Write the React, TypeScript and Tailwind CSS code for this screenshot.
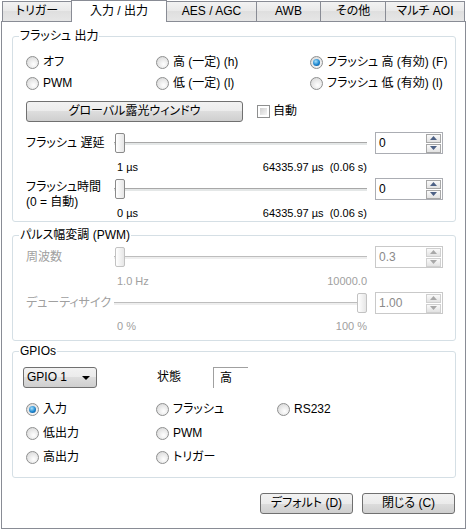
import React from "react";

const FONT =
  "font-['Liberation_Sans','Noto_Sans_CJK_JP',sans-serif] [font-feature-settings:'palt'] text-[12px] leading-[15px] text-black";

function Radio({
  checked,
  label,
  disabled,
}: {
  checked?: boolean;
  label: string;
  disabled?: boolean;
}) {
  return (
    <div className="flex items-center gap-[4px]">
      <span
        className={`flex h-[13px] w-[13px] items-center justify-center rounded-full border ${
          disabled ? "border-[#c4c4c4]" : "border-[#8e8f8f]"
        } bg-[radial-gradient(circle_at_60%_65%,#ffffff,#d2d2d2)]`}
      >
        {checked && (
          <span className="h-[7px] w-[7px] rounded-full bg-[radial-gradient(circle_at_40%_35%,#a8e0fa,#1c86cf_55%,#0b3f78)]" />
        )}
      </span>
      <span className={`whitespace-pre ${disabled ? "text-[#a0a0a0]" : ""}`}>{label}</span>
    </div>
  );
}

function Group({
  title,
  className,
  children,
}: {
  title: string;
  className: string;
  children: React.ReactNode;
}) {
  return (
    <div
      className={`relative ml-[10px] w-[444px] rounded-[3px] border border-[#d5dfe5] ${className}`}
    >
      <span className="absolute left-[6px] top-[-8px] bg-white px-[1px] leading-[15px]">
        {title}
      </span>
      {children}
    </div>
  );
}

function Arrow({ up, disabled }: { up?: boolean; disabled?: boolean }) {
  return (
    <svg width="7" height="4" viewBox="0 0 7 4">
      <polygon
        points={up ? "0,4 7,4 3.5,0" : "0,0 7,0 3.5,4"}
        fill={disabled ? "#a8a8a8" : "#4d6185"}
      />
    </svg>
  );
}

function Spin({ value, disabled }: { value: string; disabled?: boolean }) {
  return (
    <div
      className={`flex h-[22px] w-[68px] border ${
        disabled ? "border-[#c9c9c9]" : "border-[#abadb3]"
      } bg-white`}
    >
      <span
        className={`flex-1 pl-[3px] leading-[20px] ${
          disabled ? "text-[#8a8a8a]" : ""
        }`}
      >
        {value}
      </span>
      <div className="flex flex-col justify-center gap-[1px] pr-[1px]">
        {[true, false].map((up) => (
          <div
            key={String(up)}
            className={`flex h-[9px] w-[15px] items-center justify-center border ${
              disabled ? "border-[#d0d0d0]" : "border-[#a7a7a7]"
            } bg-[linear-gradient(#fafafa,#e2e2e2)]`}
          >
            <Arrow up={up} disabled={disabled} />
          </div>
        ))}
      </div>
    </div>
  );
}

function Slider({ end, disabled }: { end?: boolean; disabled?: boolean }) {
  return (
    <div className="relative flex h-[22px] w-[256px] items-center">
      <div
        className={`ml-[2px] mr-[1px] h-[3px] flex-1 border-t ${
          disabled ? "border-[#bdbdbd] bg-[#eeeeee]" : "border-[#a8a8a8] bg-[#e4e7e7]"
        }`}
      />
      <div
        className={`absolute top-[1px] h-[20px] w-[10px] rounded-[2px] border ${
          end ? "right-[1px]" : "left-[3px]"
        } ${
          disabled ? "border-[#c2c2c2]" : "border-[#8a8a8a]"
        } bg-[linear-gradient(90deg,#ffffff,#e6e6e6)]`}
      />
    </div>
  );
}

function Values({
  left,
  right,
  disabled,
  mt,
}: {
  left: string;
  right: string;
  disabled?: boolean;
  mt: string;
}) {
  return (
    <div
      className={`${mt} flex h-[14px] items-center justify-between pl-[5px] pr-[1px] text-[11px] ${
        disabled ? "text-[#a0a0a0]" : ""
      }`}
    >
      <span>{left}</span>
      <span className="whitespace-pre">{right}</span>
    </div>
  );
}

function Button({ children, w }: { children: React.ReactNode; w: string }) {
  return (
    <div
      className={`${w} flex h-[21px] items-center justify-center rounded-[3px] border border-[#707070] bg-[linear-gradient(#f2f2f2,#ebebeb_50%,#dddddd_50%,#cfcfcf)]`}
    >
      {children}
    </div>
  );
}

const tabs = [
  { label: "トリガー", w: "w-[69px]", cls: "border-l" },
  { label: "入力 / 出力", w: "w-[96px]", active: true },
  { label: "AES / AGC", w: "w-[89px]", cls: "" },
  { label: "AWB", w: "w-[64px]", cls: "border-l" },
  { label: "その他", w: "w-[65px]", cls: "border-l" },
  { label: "マルチ AOI", w: "w-[80px]", cls: "border-x" },
];

export default function App() {
  return (
    <div className={`${FONT} h-[530px] w-[468px] overflow-hidden bg-white`}>
      {/* tab strip */}
      <div className="relative z-10 flex h-[22px] items-start pl-[2px]">
        {tabs.map((t) =>
          t.active ? (
            <div
              key={t.label}
              className={`${t.w} flex h-[22px] items-center justify-center border-x border-t border-[#898c95] bg-white`}
            >
              {t.label}
            </div>
          ) : (
            <div
              key={t.label}
              className={`${t.w} mt-[1px] flex h-[20px] items-center justify-center border-t ${t.cls} border-[#898c95] bg-[linear-gradient(#f3f3f3,#e8e8e8_50%,#dfdfdf_50%,#e6e6e6)]`}
            >
              {t.label}
            </div>
          )
        )}
      </div>

      {/* panel */}
      <div className="-mt-[1px] ml-[1px] h-[508px] w-[465px] border border-[#898c95] bg-white">
        {/* Flash output */}
        <Group title="フラッシュ 出力" className="mt-[14px] h-[186px]">
          <div className="pl-[13px] pt-[15px]">
            <div className="flex h-[21px] items-center">
              <div className="w-[130px]">
                <Radio label="オフ" />
              </div>
              <div className="w-[154px]">
                <Radio label="高 (一定) (h)" />
              </div>
              <Radio checked label="フラッシュ 高 (有効) (F)" />
            </div>
            <div className="flex h-[21px] items-center">
              <div className="w-[130px]">
                <Radio label="PWM" />
              </div>
              <div className="w-[154px]">
                <Radio label="低 (一定) (l)" />
              </div>
              <Radio label="フラッシュ 低 (有効) (l)" />
            </div>

            <div className="mt-[7px] flex h-[21px] items-center">
              <Button w="w-[217px]">グローバル露光ウィンドウ</Button>
              <span className="ml-[14px] h-[13px] w-[13px] border border-[#8e8f8f] bg-white p-[2px]">
                <span className="block h-full w-full bg-[linear-gradient(135deg,#cfcfcf,#f6f6f6)]" />
              </span>
              <span className="ml-[3px]">自動</span>
            </div>

            {/* slider 1 */}
            <div className="mt-[10px] flex">
              <div className="flex h-[22px] w-[86px] items-center">フラッシュ 遅延</div>
              <div className="w-[256px]">
                <Slider />
                <Values mt="mt-[6px]" left="1 µs" right="64335.97 µs  (0.06 s)" />
              </div>
              <div className="ml-[7px]">
                <Spin value="0" />
              </div>
            </div>

            {/* slider 2 */}
            <div className="mt-[4px] flex">
              <div className="w-[86px] pt-[2px] leading-[15px]">
                <div>フラッシュ時間</div>
                <div>(0 = 自動)</div>
              </div>
              <div className="w-[256px]">
                <Slider />
                <Values mt="mt-[6px]" left="0 µs" right="64335.97 µs  (0.06 s)" />
              </div>
              <div className="ml-[7px]">
                <Spin value="0" />
              </div>
            </div>
          </div>
        </Group>

        {/* PWM */}
        <Group title="パルス幅変調 (PWM)" className="mt-[13px] h-[106px]">
          <div className="pl-[13px] pt-[10px]">
            <div className="flex">
              <div className="flex h-[22px] w-[86px] items-center text-[#a0a0a0]">周波数</div>
              <div className="w-[256px]">
                <Slider disabled />
                <Values mt="mt-[6px]" left="1.0 Hz" right="10000.0" disabled />
              </div>
              <div className="ml-[7px]">
                <Spin value="0.3" disabled />
              </div>
            </div>
            <div className="mt-[4px] flex">
              <div className="flex h-[22px] w-[86px] items-center overflow-hidden whitespace-nowrap text-[#a0a0a0]">
                デューティサイク
              </div>
              <div className="w-[256px]">
                <Slider end disabled />
                <Values mt="mt-[5px]" left="0 %" right="100 %" disabled />
              </div>
              <div className="ml-[7px]">
                <Spin value="1.00" disabled />
              </div>
            </div>
          </div>
        </Group>

        {/* GPIOs */}
        <Group title="GPIOs" className="mt-[10px] h-[127px]">
          <div className="pt-[15px]">
            <div className="flex h-[21px] items-center pl-[10px]">
              <div className="flex h-[21px] w-[74px] items-center justify-between rounded-[3px] border border-[#707070] bg-[linear-gradient(#f2f2f2,#ebebeb_50%,#dddddd_50%,#cfcfcf)] pl-[3px] pr-[6px]">
                <span>GPIO 1</span>
                <svg width="8" height="4" viewBox="0 0 8 4">
                  <polygon points="0,0 8,0 4,4" fill="#000" />
                </svg>
              </div>
              <span className="ml-[60px] w-[56px]">状態</span>
              <div className="flex h-[21px] w-[35px] items-center border-l border-t border-[#a0a0a0] pl-[6px]">
                高
              </div>
            </div>
            <div className="mt-[9px] pl-[13px]">
              <div className="flex h-[24px] items-center">
                <div className="w-[130px]">
                  <Radio checked label="入力" />
                </div>
                <div className="w-[121px]">
                  <Radio label="フラッシュ" />
                </div>
                <Radio label="RS232" />
              </div>
              <div className="flex h-[24px] items-center">
                <div className="w-[130px]">
                  <Radio label="低出力" />
                </div>
                <Radio label="PWM" />
              </div>
              <div className="flex h-[24px] items-center">
                <div className="w-[130px]">
                  <Radio label="高出力" />
                </div>
                <Radio label="トリガー" />
              </div>
            </div>
          </div>
        </Group>

        {/* buttons */}
        <div className="mt-[15px] flex justify-end gap-[9px] pr-[10px]">
          <Button w="w-[93px]">デフォルト (D)</Button>
          <Button w="w-[93px]">閉じる (C)</Button>
        </div>
      </div>
    </div>
  );
}
